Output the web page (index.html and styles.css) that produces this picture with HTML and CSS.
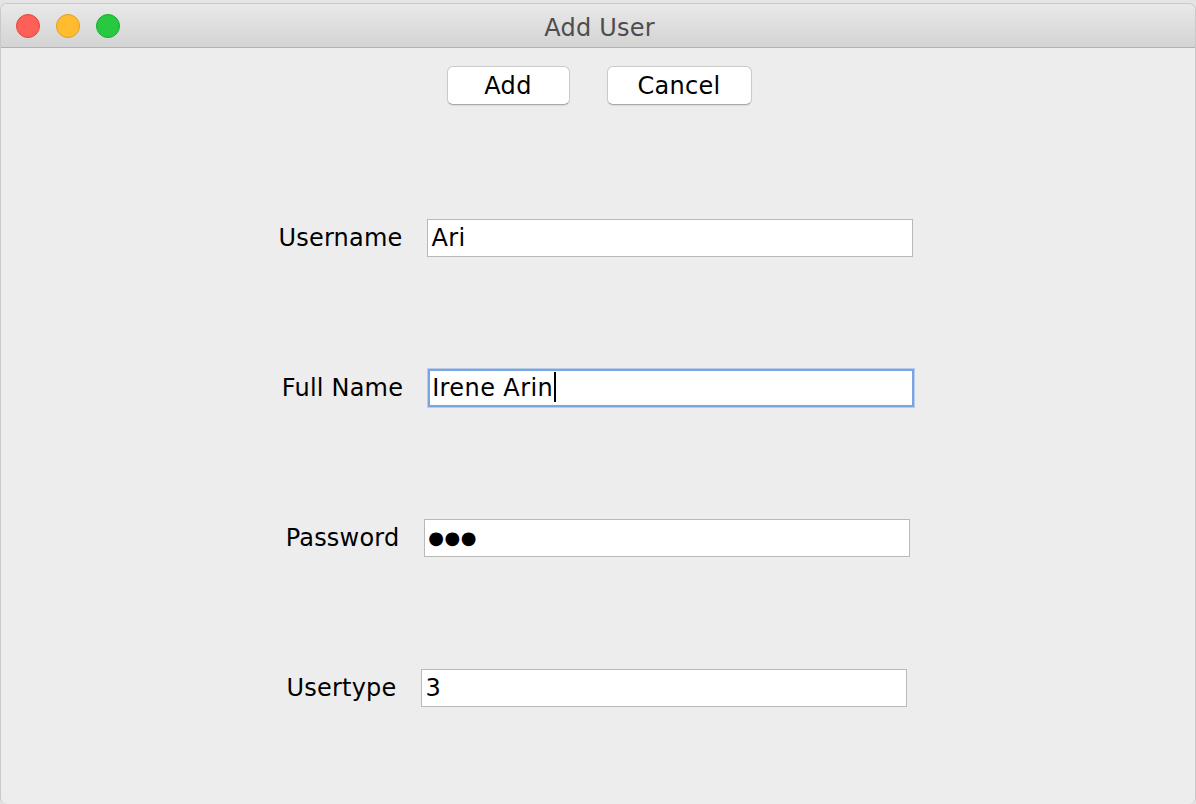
FILE: index.html
```html
<!DOCTYPE html>
<html>
<head>
<meta charset="utf-8">
<title>Add User</title>
<link rel="stylesheet" href="styles.css">
</head>
<body>
<div class="window">
  <div class="titlebar">
    <div class="lights">
      <span class="light red"></span>
      <span class="light yellow"></span>
      <span class="light green"></span>
    </div>
    <div class="title">Add User</div>
  </div>
  <div class="content">
    <div class="actions">
      <button class="btn btn-add">Add</button>
      <button class="btn btn-cancel">Cancel</button>
    </div>
    <div class="form">
      <div class="row row-username">
        <span class="label">Username</span>
        <div class="field">Ari</div>
      </div>
      <div class="row">
        <span class="label">Full Name</span>
        <div class="field focused">Irene Arin<span class="caret"></span></div>
      </div>
      <div class="row">
        <span class="label">Password</span>
        <div class="field password">&#9679;&#9679;&#9679;</div>
      </div>
      <div class="row row-usertype">
        <span class="label">Usertype</span>
        <div class="field">3</div>
      </div>
    </div>
  </div>
</div>
</body>
</html>
```
FILE: styles.css
```css
* { box-sizing: border-box; }
html, body {
  margin: 0;
  padding: 0;
  width: 1196px;
  height: 804px;
  overflow: hidden;
  background: #e4e4e4;
  font-family: "DejaVu Sans", "Liberation Sans", sans-serif;
}
.window {
  margin-top: 3px;
  height: 801px;
  background: #ededed;
  border-radius: 7px 7px 6px 6px;
  border: 1px solid #c9c9c9;
  border-bottom: none;
  overflow: hidden;
  display: flex;
  flex-direction: column;
}
.titlebar {
  position: relative;
  height: 44px;
  flex: none;
  background: linear-gradient(#e9e9e9, #d3d3d3);
  border-bottom: 1px solid #b1b1b1;
  display: flex;
  align-items: center;
  justify-content: center;
}
.lights {
  position: absolute;
  left: 15px;
  top: 10px;
  display: flex;
  gap: 16px;
}
.light {
  width: 24px;
  height: 24px;
  border-radius: 50%;
  display: block;
}
.red { background: #fe5f57; border: 1px solid #e2463f; }
.yellow { background: #febc2e; border: 1px solid #e1a116; }
.green { background: #28c840; border: 1px solid #14ae2a; }
.title {
  font-size: 24px;
  color: #4d4d4d;
  margin-top: 4px;
  margin-left: 3px;
  letter-spacing: 0.2px;
}
.content {
  flex: 1;
  display: flex;
  flex-direction: column;
}
.actions {
  display: flex;
  justify-content: center;
  gap: 37px;
  padding-top: 18px;
  padding-left: 2px;
}
.btn {
  height: 39px;
  background: #ffffff;
  border: 1px solid #cacaca;
  border-bottom-color: #a9a9a9;
  border-radius: 6px;
  box-shadow: 0 1px 1px rgba(0,0,0,0.08);
  font-family: "DejaVu Sans", sans-serif;
  font-size: 24px;
  color: #000;
  padding: 1px 0 0;
  text-align: center;
  letter-spacing: 0.3px;
}
.btn-add { width: 123px; }
.btn-cancel { width: 145px; }
.form {
  margin-top: 114px;
  display: flex;
  flex-direction: column;
  gap: 112px;
}
.row {
  display: flex;
  justify-content: center;
  align-items: center;
  gap: 25px;
}
.row-username { padding-right: 4px; }
.row-usertype { padding-right: 2px; }
.label {
  font-size: 24px;
  color: #000;
  letter-spacing: 0.2px;
}
.field {
  width: 486px;
  height: 38px;
  background: #fff;
  border: 1px solid #b9b9b9;
  font-size: 24px;
  line-height: 36px;
  padding-left: 3px;
  color: #000;
  letter-spacing: 0.4px;
}
.field.focused {
  border: 2px solid #79a6e2;
  box-shadow: 0 0 0 1px rgba(121,166,226,0.45);
  line-height: 34px;
  padding-left: 2px;
}
.caret {
  display: inline-block;
  width: 2px;
  height: 30px;
  background: #000;
  vertical-align: middle;
  margin-left: 1px;
  margin-top: -4px;
}
.field.password {
  font-size: 18px;
  letter-spacing: 0.5px;
}
```
